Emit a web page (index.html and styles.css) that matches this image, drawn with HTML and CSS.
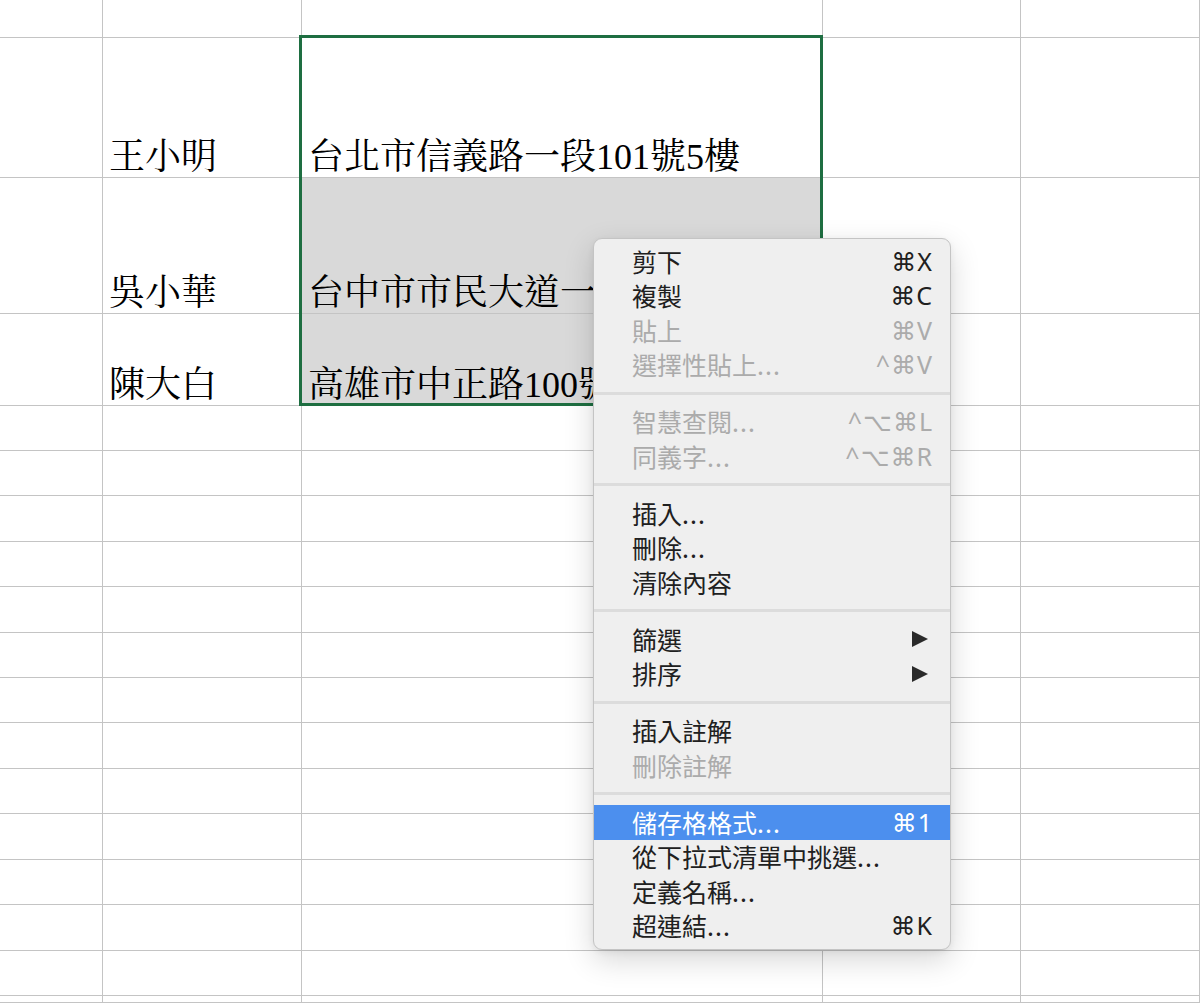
FILE: index.html
```html
<!DOCTYPE html>
<html lang="zh-Hant">
<head>
<meta charset="utf-8">
<title>Excel context menu</title>
<link rel="stylesheet" href="styles.css">
</head>
<body>
<div class="sheet">
  <div class="c"></div><div class="c"></div><div class="c"></div><div class="c"></div><div class="c"></div>
  <div class="c"></div><div class="c">王小明</div><div class="c">台北市信義路一段101號5樓</div><div class="c"></div><div class="c"></div>
  <div class="c"></div><div class="c">吳小華</div><div class="c sel">台中市市民大道一段200號</div><div class="c"></div><div class="c"></div>
  <div class="c"></div><div class="c">陳大白</div><div class="c sel">高雄市中正路100號</div><div class="c"></div><div class="c"></div>
  <div class="c"></div><div class="c"></div><div class="c"></div><div class="c"></div><div class="c"></div>
  <div class="c"></div><div class="c"></div><div class="c"></div><div class="c"></div><div class="c"></div>
  <div class="c"></div><div class="c"></div><div class="c"></div><div class="c"></div><div class="c"></div>
  <div class="c"></div><div class="c"></div><div class="c"></div><div class="c"></div><div class="c"></div>
  <div class="c"></div><div class="c"></div><div class="c"></div><div class="c"></div><div class="c"></div>
  <div class="c"></div><div class="c"></div><div class="c"></div><div class="c"></div><div class="c"></div>
  <div class="c"></div><div class="c"></div><div class="c"></div><div class="c"></div><div class="c"></div>
  <div class="c"></div><div class="c"></div><div class="c"></div><div class="c"></div><div class="c"></div>
  <div class="c"></div><div class="c"></div><div class="c"></div><div class="c"></div><div class="c"></div>
  <div class="c"></div><div class="c"></div><div class="c"></div><div class="c"></div><div class="c"></div>
  <div class="c"></div><div class="c"></div><div class="c"></div><div class="c"></div><div class="c"></div>
  <div class="c"></div><div class="c"></div><div class="c"></div><div class="c"></div><div class="c"></div>
  <div class="c"></div><div class="c"></div><div class="c"></div><div class="c"></div><div class="c"></div>
  <div class="c"></div><div class="c"></div><div class="c"></div><div class="c"></div><div class="c"></div>
</div>

<div class="selection"></div>

<div class="menu">
  <div class="item"><span>剪下</span><span class="kbd">⌘X</span></div>
  <div class="item"><span>複製</span><span class="kbd">⌘C</span></div>
  <div class="item dis"><span>貼上</span><span class="kbd">⌘V</span></div>
  <div class="item dis"><span>選擇性貼上<span class="dots">...</span></span><span class="kbd">^⌘V</span></div>
  <div class="sep"></div>
  <div class="item dis"><span>智慧查閱<span class="dots">...</span></span><span class="kbd">^⌥⌘L</span></div>
  <div class="item dis"><span>同義字<span class="dots">...</span></span><span class="kbd">^⌥⌘R</span></div>
  <div class="sep"></div>
  <div class="item"><span>插入<span class="dots">...</span></span></div>
  <div class="item"><span>刪除<span class="dots">...</span></span></div>
  <div class="item"><span>清除內容</span></div>
  <div class="sep"></div>
  <div class="item"><span>篩選</span><span class="arrow"></span></div>
  <div class="item"><span>排序</span><span class="arrow"></span></div>
  <div class="sep"></div>
  <div class="item"><span>插入註解</span></div>
  <div class="item dis"><span>刪除註解</span></div>
  <div class="sep"></div>
  <div class="item hl"><span>儲存格格式<span class="dots">...</span></span><span class="kbd">⌘1</span></div>
  <div class="item"><span>從下拉式清單中挑選<span class="dots">...</span></span></div>
  <div class="item"><span>定義名稱<span class="dots">...</span></span></div>
  <div class="item"><span>超連結<span class="dots">...</span></span><span class="kbd">⌘K</span></div>
</div>
</body>
</html>
```

FILE: styles.css
```css
html, body {
  margin: 0;
  padding: 0;
}

body {
  width: 1200px;
  height: 1003px;
  overflow: hidden;
  background: #ffffff;
  position: relative;
}

.sheet {
  display: grid;
  grid-template-columns: 103px 199px 521px 198px 1fr;
  grid-template-rows: 38px 140px 136px 92px 45px 45px 46px 45px 46px 45px 45px 46px 45px 46px 45px 46px 45px 1fr;
  height: 1003px;
}

.c {
  box-sizing: border-box;
  border-right: 1px solid #c4c4c4;
  border-bottom: 1px solid #c4c4c4;
  display: flex;
  align-items: flex-end;
  padding: 0 0 2px 6px;
  min-width: 0;
  font-family: "Liberation Serif", "Noto Serif CJK TC", "Noto Sans CJK TC", serif;
  font-size: 36px;
  line-height: 1;
  white-space: nowrap;
  color: #000000;
}

.sel {
  background: #d9d9d9;
}

.selection {
  position: absolute;
  left: 299px;
  top: 35px;
  width: 524px;
  height: 371px;
  box-sizing: border-box;
  border: 3px solid #1e6e41;
}

.menu {
  position: absolute;
  left: 593px;
  top: 238px;
  width: 358px;
  height: 712px;
  box-sizing: border-box;
  padding: 5px 0 6px;
  background: #efefef;
  border: 1px solid #c4c4c4;
  border-radius: 9px;
  box-shadow: 0 10px 30px rgba(0, 0, 0, 0.16), 0 2px 6px rgba(0, 0, 0, 0.06);
  font-family: "Noto Sans CJK TC", "Noto Sans", sans-serif;
  font-size: 25px;
  color: #202020;
  overflow: hidden;
}

.item {
  height: 34.5px;
  display: flex;
  align-items: center;
  justify-content: space-between;
  padding: 0 18px 0 38px;
  line-height: 1;
  white-space: nowrap;
}

.dots {
  letter-spacing: 1px;
}

.dis {
  color: #ababab;
}

.hl {
  background: #4c8fee;
  color: #ffffff;
}

.kbd {
  font-family: "Noto Sans", "DejaVu Sans", sans-serif;
  font-size: 25px;
  letter-spacing: 1px;
  margin-right: -1px;
}

.sep {
  height: 22.5px;
  display: flex;
  align-items: center;
}

.sep::before {
  content: "";
  flex: 1;
  height: 3px;
  background: #dcdcdc;
}

.arrow {
  width: 0;
  height: 0;
  border-left: 16px solid #2a2a2a;
  border-top: 8px solid transparent;
  border-bottom: 8px solid transparent;
  margin-right: 4px;
}
```
